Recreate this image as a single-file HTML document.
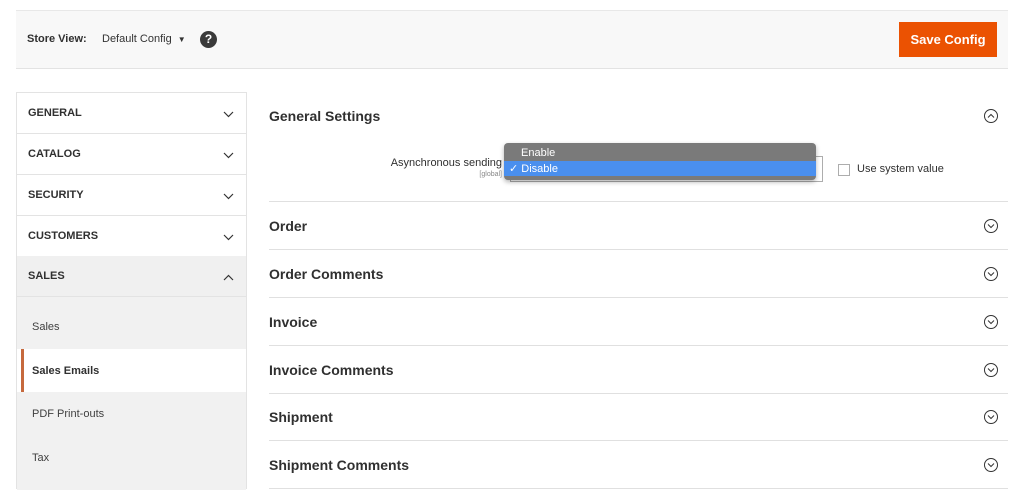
<!DOCTYPE html>
<html><head><meta charset="utf-8"><style>
*{margin:0;padding:0;box-sizing:border-box}
body{width:1024px;height:489px;overflow:hidden;background:#fff;font-family:"Liberation Sans",sans-serif;color:#303030;position:relative}
.abs{position:absolute}
.top{left:16px;top:10px;width:992px;height:59px;background:#f8f8f8;border-top:1px solid #e8e8e8;border-bottom:1px solid #e3e3e3}
.btn{left:899px;top:22px;width:98px;height:35px;background:#eb5202;color:#fff;font-size:13px;font-weight:bold;display:flex;align-items:center;justify-content:center}
.side{left:16px;top:92px;width:231px;height:397px;border:1px solid #e3e3e3;border-bottom:none}
.it{position:absolute;left:0;width:229px;height:41px;border-bottom:1px solid #e3e3e3;font-size:11px;font-weight:bold;padding-left:11px;display:flex;align-items:center}
.chev{position:absolute;right:12px;top:18px}
.sub{position:absolute;left:0;width:229px;font-size:11px;padding-left:15px;display:flex;align-items:center;color:#404040}
.sec{left:269px;width:739px;height:48px;border-bottom:1px solid #e0e0e0;font-size:14px;font-weight:bold;color:#303030;display:flex;align-items:center}
.ci{position:absolute;right:9px;top:16px}
</style></head><body>
<div class="abs top"></div>
<div class="abs" style="left:27px;top:33px;font-size:11px;font-weight:bold">Store View:</div>
<div class="abs" style="left:102px;top:33px;font-size:11px;color:#333">Default Config <span style="font-size:8px;margin-left:3px">▼</span></div>
<div class="abs" style="left:200px;top:31px;width:17px;height:17px;border-radius:50%;background:#3a3a3a;color:#fff;font-size:12px;font-weight:bold;text-align:center;line-height:17px">?</div>
<div class="abs btn">Save Config</div>

<div class="abs side">
<div class="it" style="top:0">GENERAL<svg class="chev" width="11" height="7"><path d="M1 1l4.5 4.5L10 1" fill="none" stroke="#333" stroke-width="1.2"/></svg></div>
<div class="it" style="top:41px">CATALOG<svg class="chev" width="11" height="7"><path d="M1 1l4.5 4.5L10 1" fill="none" stroke="#333" stroke-width="1.2"/></svg></div>
<div class="it" style="top:82px">SECURITY<svg class="chev" width="11" height="7"><path d="M1 1l4.5 4.5L10 1" fill="none" stroke="#333" stroke-width="1.2"/></svg></div>
<div class="it" style="top:123px">CUSTOMERS<svg class="chev" width="11" height="7"><path d="M1 1l4.5 4.5L10 1" fill="none" stroke="#333" stroke-width="1.2"/></svg></div>
<div class="it" style="top:163px;background:#f0f0f0">SALES<svg class="chev" width="11" height="7"><path d="M1 6l4.5-4.5L10 6" fill="none" stroke="#333" stroke-width="1.2"/></svg></div>
<div class="sub" style="top:204px;height:52px;background:#f1f1f1;padding-top:8px">Sales</div>
<div class="sub" style="top:256px;height:43px;background:#fff;border-left:3px solid #c6693d;left:4px;width:225px;padding-left:8px;font-weight:bold;color:#303030">Sales Emails</div>
<div class="sub" style="top:299px;height:44px;background:#f1f1f1">PDF Print-outs</div>
<div class="sub" style="top:343px;height:54px;background:#f1f1f1;padding-bottom:10px">Tax</div>
</div>

<div class="abs" style="left:269px;top:108px;font-size:14px;font-weight:bold">General Settings</div>
<svg class="abs" style="left:983px;top:108px" width="16" height="16"><circle cx="8" cy="8" r="6.5" fill="none" stroke="#333"/><path d="M5 9.5l3-3 3 3" fill="none" stroke="#333"/></svg>
<div class="abs" style="left:340px;top:157px;width:162px;text-align:right;font-size:11px;color:#303030">Asynchronous sending</div>
<div class="abs" style="left:440px;top:171px;width:62px;text-align:right;font-size:7px;color:#888">[global]</div>
<div class="abs" style="left:510px;top:156px;width:313px;height:26px;border:1px solid #adadad;background:#fff"></div>
<div class="abs" style="left:504px;top:143px;width:312px;height:37px;background:#7a7a7a;border-radius:4px;box-shadow:0 2px 5px rgba(0,0,0,.3);overflow:hidden">
<div style="height:18px;color:#fff;font-size:11px;padding:4px 0 0 17px">Enable</div>
<div style="height:15px;background:#4a8fee;color:#fff;font-size:11px;padding:1px 0 0 5px">✓ Disable</div>
</div>
<div class="abs" style="left:838px;top:164px;width:12px;height:12px;border:1px solid #adadad;background:#fff"></div>
<div class="abs" style="left:857px;top:163px;font-size:11px;color:#303030">Use system value</div>
<div class="abs" style="left:269px;top:201px;width:739px;border-top:1px solid #e0e0e0"></div>

<div class="abs sec" style="top:202px">Order<svg class="ci" width="16" height="16"><circle cx="8" cy="8" r="6.5" fill="none" stroke="#333"/><path d="M5 6.5l3 3 3-3" fill="none" stroke="#333"/></svg></div>
<div class="abs sec" style="top:250px">Order Comments<svg class="ci" width="16" height="16"><circle cx="8" cy="8" r="6.5" fill="none" stroke="#333"/><path d="M5 6.5l3 3 3-3" fill="none" stroke="#333"/></svg></div>
<div class="abs sec" style="top:298px">Invoice<svg class="ci" width="16" height="16"><circle cx="8" cy="8" r="6.5" fill="none" stroke="#333"/><path d="M5 6.5l3 3 3-3" fill="none" stroke="#333"/></svg></div>
<div class="abs sec" style="top:346px">Invoice Comments<svg class="ci" width="16" height="16"><circle cx="8" cy="8" r="6.5" fill="none" stroke="#333"/><path d="M5 6.5l3 3 3-3" fill="none" stroke="#333"/></svg></div>
<div class="abs sec" style="top:393px">Shipment<svg class="ci" width="16" height="16"><circle cx="8" cy="8" r="6.5" fill="none" stroke="#333"/><path d="M5 6.5l3 3 3-3" fill="none" stroke="#333"/></svg></div>
<div class="abs sec" style="top:441px">Shipment Comments<svg class="ci" width="16" height="16"><circle cx="8" cy="8" r="6.5" fill="none" stroke="#333"/><path d="M5 6.5l3 3 3-3" fill="none" stroke="#333"/></svg></div>
</body></html>
